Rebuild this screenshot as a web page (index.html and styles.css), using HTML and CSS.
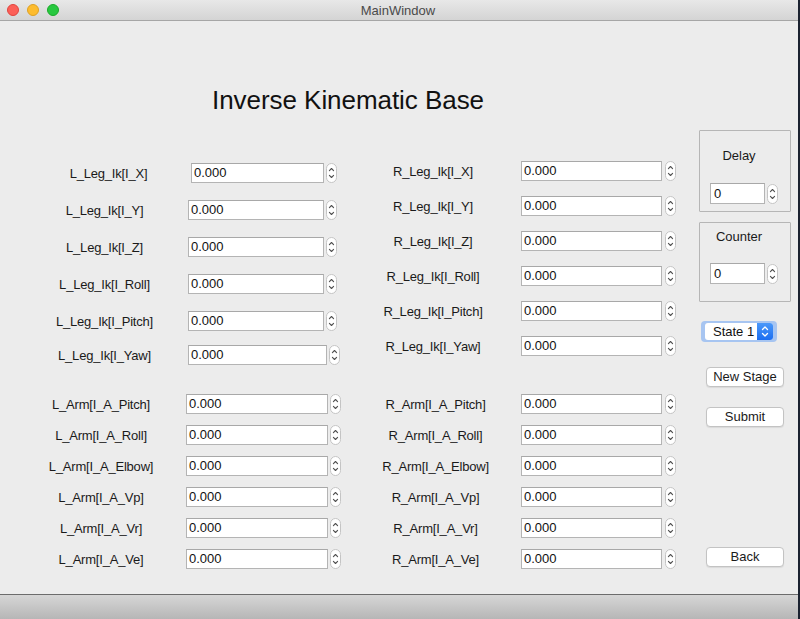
FILE: index.html
```html
<!DOCTYPE html>
<html>
<head>
<meta charset="utf-8">
<title>MainWindow</title>
<link rel="stylesheet" href="styles.css">
</head>
<body>
<svg class="defs" width="0" height="0" aria-hidden="true">
  <defs>
    <symbol id="spin" viewBox="0 0 11 20">
      <rect x="0.5" y="0.5" width="10" height="19" rx="5" fill="#fff" stroke="#c4c4c4"/>
      <path d="M3.4 7.6 L5.5 5.5 L7.6 7.6 M3.4 12.4 L5.5 14.5 L7.6 12.4" fill="none" stroke="#505050" stroke-width="1.1" stroke-linecap="round" stroke-linejoin="round"/>
    </symbol>
  </defs>
</svg>
<div class="window">
  <header class="titlebar">
    <div class="lights">
      <span class="light red"></span>
      <span class="light yellow"></span>
      <span class="light green"></span>
    </div>
    <span class="wintitle">MainWindow</span>
  </header>

  <main class="content">
    <section class="main">
      <div class="heading"><h1>Inverse Kinematic Base</h1></div>
      <div class="form">
        <div class="col col-left">
          <div class="block leg">
            <div class="row first"><span class="label">L_Leg_Ik[I_X]</span><span class="field">0.000</span><svg class="spin"><use href="#spin"/></svg></div>
            <div class="row"><span class="label">L_Leg_Ik[I_Y]</span><span class="field">0.000</span><svg class="spin"><use href="#spin"/></svg></div>
            <div class="row"><span class="label">L_Leg_Ik[I_Z]</span><span class="field">0.000</span><svg class="spin"><use href="#spin"/></svg></div>
            <div class="row"><span class="label">L_Leg_Ik[I_Roll]</span><span class="field">0.000</span><svg class="spin"><use href="#spin"/></svg></div>
            <div class="row"><span class="label">L_Leg_Ik[I_Pitch]</span><span class="field">0.000</span><svg class="spin"><use href="#spin"/></svg></div>
            <div class="row last"><span class="label">L_Leg_Ik[I_Yaw]</span><span class="field">0.000</span><svg class="spin"><use href="#spin"/></svg></div>
          </div>
          <div class="block arm">
            <div class="row"><span class="label">L_Arm[I_A_Pitch]</span><span class="field">0.000</span><svg class="spin"><use href="#spin"/></svg></div>
            <div class="row"><span class="label">L_Arm[I_A_Roll]</span><span class="field">0.000</span><svg class="spin"><use href="#spin"/></svg></div>
            <div class="row"><span class="label">L_Arm[I_A_Elbow]</span><span class="field">0.000</span><svg class="spin"><use href="#spin"/></svg></div>
            <div class="row"><span class="label">L_Arm[I_A_Vp]</span><span class="field">0.000</span><svg class="spin"><use href="#spin"/></svg></div>
            <div class="row"><span class="label">L_Arm[I_A_Vr]</span><span class="field">0.000</span><svg class="spin"><use href="#spin"/></svg></div>
            <div class="row"><span class="label">L_Arm[I_A_Ve]</span><span class="field">0.000</span><svg class="spin"><use href="#spin"/></svg></div>
          </div>
        </div>
        <div class="col col-right">
          <div class="block leg">
            <div class="row"><span class="label">R_Leg_Ik[I_X]</span><span class="field">0.000</span><svg class="spin"><use href="#spin"/></svg></div>
            <div class="row"><span class="label">R_Leg_Ik[I_Y]</span><span class="field">0.000</span><svg class="spin"><use href="#spin"/></svg></div>
            <div class="row"><span class="label">R_Leg_Ik[I_Z]</span><span class="field">0.000</span><svg class="spin"><use href="#spin"/></svg></div>
            <div class="row"><span class="label">R_Leg_Ik[I_Roll]</span><span class="field">0.000</span><svg class="spin"><use href="#spin"/></svg></div>
            <div class="row"><span class="label">R_Leg_Ik[I_Pitch]</span><span class="field">0.000</span><svg class="spin"><use href="#spin"/></svg></div>
            <div class="row"><span class="label">R_Leg_Ik[I_Yaw]</span><span class="field">0.000</span><svg class="spin"><use href="#spin"/></svg></div>
          </div>
          <div class="block arm">
            <div class="row"><span class="label">R_Arm[I_A_Pitch]</span><span class="field">0.000</span><svg class="spin"><use href="#spin"/></svg></div>
            <div class="row"><span class="label">R_Arm[I_A_Roll]</span><span class="field">0.000</span><svg class="spin"><use href="#spin"/></svg></div>
            <div class="row"><span class="label">R_Arm[I_A_Elbow]</span><span class="field">0.000</span><svg class="spin"><use href="#spin"/></svg></div>
            <div class="row"><span class="label">R_Arm[I_A_Vp]</span><span class="field">0.000</span><svg class="spin"><use href="#spin"/></svg></div>
            <div class="row"><span class="label">R_Arm[I_A_Vr]</span><span class="field">0.000</span><svg class="spin"><use href="#spin"/></svg></div>
            <div class="row"><span class="label">R_Arm[I_A_Ve]</span><span class="field">0.000</span><svg class="spin"><use href="#spin"/></svg></div>
          </div>
        </div>
      </div>
    </section>

    <aside class="side">
      <div class="group delay">
        <span class="group-label">Delay</span>
        <div class="spinbox"><span class="field small">0</span><svg class="spin tall"><use href="#spin"/></svg></div>
      </div>
      <div class="group counter">
        <span class="group-label">Counter</span>
        <div class="spinbox"><span class="field small">0</span><svg class="spin tall"><use href="#spin"/></svg></div>
      </div>
      <div class="combo-ring">
        <div class="combo">
          <span class="combo-text">State 1</span>
          <span class="combo-btn">
            <svg width="16" height="17" viewBox="0 0 16 17"><path d="M5.5 6.5 L8 4 L10.5 6.5 M5.5 10.5 L8 13 L10.5 10.5" fill="none" stroke="#fff" stroke-width="1.3" stroke-linecap="round" stroke-linejoin="round"/></svg>
          </span>
        </div>
      </div>
      <button class="btn new-stage">New Stage</button>
      <button class="btn submit">Submit</button>
      <button class="btn back">Back</button>
    </aside>
  </main>

  <footer class="statusbar"></footer>
</div>
</body>
</html>
```

FILE: styles.css
```css
* { box-sizing: border-box; }

body {
  margin: 0;
  background: #1b2230;
  font-family: "Liberation Sans", Arial, sans-serif;
}

.defs { position: absolute; width: 0; height: 0; }

.window {
  width: 798px;
  height: 619px;
  background: #ececec;
  display: flex;
  flex-direction: column;
  overflow: hidden;
}

/* title bar */
.titlebar {
  position: relative;
  flex: none;
  height: 21px;
  border-bottom: 1px solid #a6a6a6;
  background: linear-gradient(#e8e8e8, #d4d4d4);
  display: flex;
  align-items: center;
  justify-content: center;
}
.wintitle {
  font-size: 13px;
  color: #4a4a4a;
  margin-left: -2px;
}
.lights {
  position: absolute;
  left: 7px;
  top: 4px;
  display: flex;
  gap: 8px;
}
.light {
  width: 12px;
  height: 12px;
  border-radius: 50%;
}
.red { background: #fc5f57; border: 0.5px solid #e0443e; }
.yellow { background: #fdbc2e; border: 0.5px solid #dea123; }
.green { background: #28c840; border: 0.5px solid #1aab29; }

/* main content */
.content {
  flex: none;
  height: 573px;
  display: flex;
}

.main {
  flex: none;
  width: 699px;
}

.heading {
  height: 140px;
  padding-top: 64px;
  padding-left: 212px;
}
h1 {
  margin: 0;
  font-size: 26px;
  line-height: 30px;
  font-weight: 400;
  color: #111;
  letter-spacing: -0.05px;
}

.form { display: flex; }
.col-left { width: 350px; padding-top: 2px; }
.col-right { width: 349px; }

.block { display: flex; flex-direction: column; }
.col-left .leg { gap: 17px; }
.col-left .arm { gap: 11px; margin-top: 29px; }
.col-right .leg { gap: 15px; }
.col-right .arm { gap: 11px; margin-top: 38px; }

.row {
  display: flex;
  align-items: center;
  height: 20px;
}

.label {
  flex: none;
  font-size: 13px;
  letter-spacing: -0.2px;
  color: #1a1a1a;
  text-align: center;
  white-space: nowrap;
}

.field {
  flex: none;
  height: 20px;
  background: #fff;
  border: 1px solid #b4b4b4;
  border-top-color: #a8a8a8;
  font-size: 13px;
  line-height: 18px;
  padding-left: 2px;
  color: #111;
}

.spin {
  flex: none;
  width: 11px;
  height: 20px;
  margin-left: 2px;
}

/* left leg */
.col-left .leg .label { margin-left: 30px; width: 149px; }
.col-left .leg .field { margin-left: 9px; width: 136px; }
.col-left .leg .first .label { margin-left: 34px; }
.col-left .leg .first .field { margin-left: 8px; width: 133px; }
.col-left .leg .last { margin-top: -3px; }
.col-left .leg .last .field { width: 139px; }

/* left arm */
.col-left .arm .label { margin-left: 30px; width: 142px; }
.col-left .arm .field { margin-left: 14px; width: 142px; }

/* right leg */
.col-right .leg .label { margin-left: 8px; width: 150px; }
.col-right .leg .field { margin-left: 13px; width: 141px; }
.col-right .leg .spin { margin-left: 3px; }

/* right arm */
.col-right .arm .label { margin-left: 10px; width: 151px; }
.col-right .arm .field { margin-left: 10px; width: 141px; }
.col-right .arm .spin { margin-left: 3px; }

/* side panel */
.side {
  flex: none;
  width: 99px;
  display: flex;
  flex-direction: column;
  align-items: flex-start;
  padding-top: 109px;
}

.group {
  width: 92px;
  border: 1px solid #b6b6b6;
  border-radius: 1px;
  display: flex;
  flex-direction: column;
  align-items: flex-start;
  padding-left: 10px;
}
.group-label {
  width: 58px;
  text-align: center;
  font-size: 13px;
  line-height: 16px;
  color: #1a1a1a;
}
.spinbox { display: flex; align-items: center; }
.field.small { width: 55px; height: 21px; line-height: 19px; padding-left: 3px; }
.spin.tall { height: 20px; margin-left: 2px; }

.delay { height: 82px; padding-top: 17px; }
.delay .spinbox { margin-top: 19px; }
.counter { height: 80px; margin-top: 10px; padding-top: 6px; }
.counter .spinbox { margin-top: 18px; }

.combo-ring {
  margin-top: 19px;
  margin-left: 2px;
  width: 76px;
  height: 21px;
  padding: 2px 4px;
  border-radius: 4px;
  background: #a7c5f1;
}
.combo {
  display: flex;
  height: 17px;
  border-radius: 3px;
  overflow: hidden;
  background: #fff;
}
.combo-text {
  flex: 1;
  font-size: 13px;
  line-height: 17px;
  padding-left: 8px;
  color: #111;
  white-space: nowrap;
}
.combo-btn {
  flex: none;
  width: 16px;
  height: 17px;
  background: linear-gradient(#4b98f9, #1b6ef1);
  display: flex;
}

.btn {
  margin-left: 7px;
  width: 78px;
  height: 20px;
  padding: 0;
  background: #fff;
  border: 1px solid #c3c3c3;
  border-radius: 4px;
  box-shadow: 0 1px 1px rgba(0, 0, 0, 0.08);
  font-family: "Liberation Sans", Arial, sans-serif;
  font-size: 13px;
  line-height: 18px;
  color: #1a1a1a;
}
.new-stage { margin-top: 25px; }
.submit { margin-top: 20px; }
.back { margin-top: 120px; }

/* status bar */
.statusbar {
  flex: 1;
  border-top: 1px solid #6c6c6c;
  background: linear-gradient(#d6d6d6, #b6b6b6);
}
```
